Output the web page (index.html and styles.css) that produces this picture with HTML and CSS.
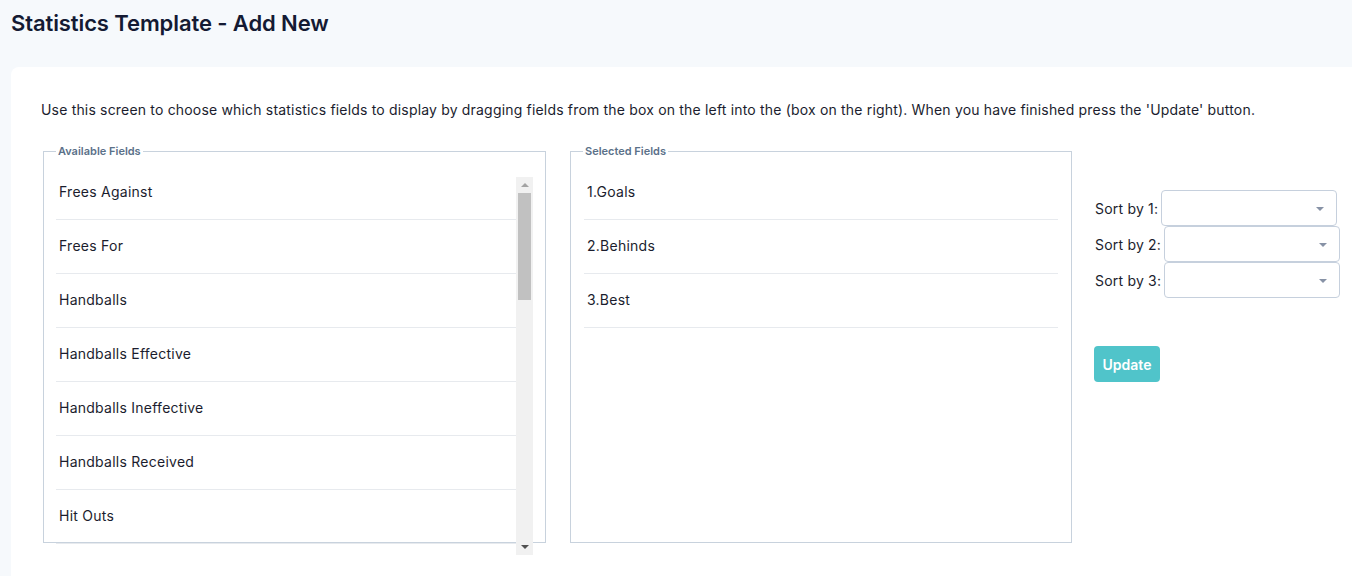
FILE: index.html
```html
<!DOCTYPE html>
<html>
<head>
<meta charset="utf-8">
<link rel="stylesheet" href="styles.css">
</head>
<body>
<h1 class="title">Statistics Template - Add New</h1>
<div class="card">
  <p class="intro">Use this screen to choose which statistics fields to display by dragging fields from the box on the left into the (box on the right). When you have finished press the 'Update' button.</p>
  <div class="row">
    <fieldset class="box">
      <legend class="legend">Available Fields</legend>
      <div class="avail">
        <div class="avail-items">
          <div class="avail-inner">
            <div class="item">Frees Against</div>
            <div class="item">Frees For</div>
            <div class="item">Handballs</div>
            <div class="item">Handballs Effective</div>
            <div class="item">Handballs Ineffective</div>
            <div class="item">Handballs Received</div>
            <div class="item">Hit Outs</div>
          </div>
        </div>
        <div class="sbar">
          <div class="sbtn"><span class="arr-up"></span></div>
          <div class="sthumb"></div>
          <div class="sfill"></div>
          <div class="sbtn"><span class="arr-down"></span></div>
        </div>
      </div>
    </fieldset>
    <fieldset class="box">
      <legend class="legend">Selected Fields</legend>
      <div class="sel">
        <div class="item">1.Goals</div>
        <div class="item">2.Behinds</div>
        <div class="item">3.Best</div>
      </div>
    </fieldset>
    <div class="sort">
      <div class="sort-row"><span class="sort-label">Sort by 1:</span><span class="select"><span class="caret"></span></span></div>
      <div class="sort-row"><span class="sort-label">Sort by 2:</span><span class="select"><span class="caret"></span></span></div>
      <div class="sort-row"><span class="sort-label">Sort by 3:</span><span class="select"><span class="caret"></span></span></div>
      <button class="btn">Update</button>
    </div>
  </div>
</div>
</body>
</html>
```
FILE: styles.css
```css
html, body {
  margin: 0;
  padding: 0;
  background: #f6f9fc;
  font-family: "Inter", "Roboto", "Liberation Sans", sans-serif;
  color: #1b1d2e;
  overflow: hidden;
}
.title {
  margin: 0;
  padding: 9px 0 0 11px;
  height: 67px;
  box-sizing: border-box;
  font-size: 22px;
  line-height: 28px;
  font-weight: 600;
  color: #141a33;
  letter-spacing: -0.1px;
}
.card {
  margin-left: 11px;
  background: #fff;
  border-top-left-radius: 8px;
  padding: 33px 0 0 30px;
  height: 509px;
  box-sizing: border-box;
}
.intro {
  margin: 0 0 25px 0;
  font-size: 14px;
  line-height: 20px;
  color: #1b1d2e;
  letter-spacing: 0.18px;
}
.row {
  display: flex;
  align-items: flex-start;
  margin-left: 2px;
}
.box {
  margin: 0;
  border: 1px solid #c8d2dd;
  padding: 0 13px;
  height: 398px;
  box-sizing: border-box;
  min-width: 0;
}
.box:first-child { width: 503px; margin-right: 24px; }
.box:nth-child(2) { width: 502px; margin-right: 22px; }
.legend {
  font-size: 11px;
  font-weight: 600;
  color: #5b7189;
  padding: 0 2px;
  margin-left: -1px;
  line-height: 13px;
  letter-spacing: 0;
}
.avail {
  display: flex;
  margin-top: 19px;
  margin-left: -1px;
  width: 477px;
  height: 378px;
}
.avail-items {
  width: 460px;
  height: 378px;
  overflow: hidden;
}
.avail-inner { margin-top: -11px; }
.item {
  height: 54px;
  box-sizing: border-box;
  border-bottom: 1px solid #e7eaee;
  padding-left: 3px;
  padding-bottom: 2px;
  display: flex;
  align-items: center;
  font-size: 14px;
  color: #1b1d2e;
  letter-spacing: 0.25px;
}
.sel { margin-top: 8px; }
.sbar {
  width: 17px;
  height: 378px;
  background: #f1f1f1;
  display: flex;
  flex-direction: column;
  align-items: center;
}
.sbtn {
  height: 16px;
  width: 17px;
  display: flex;
  align-items: center;
  justify-content: center;
}
.arr-up {
  width: 0; height: 0;
  border-left: 4px solid transparent;
  border-right: 4px solid transparent;
  border-bottom: 4px solid #a3a3a3;
}
.arr-down {
  width: 0; height: 0;
  border-left: 4px solid transparent;
  border-right: 4px solid transparent;
  border-top: 4px solid #505050;
}
.sthumb {
  width: 13px;
  height: 107px;
  background: #c1c1c1;
}
.sfill { flex: 1; }
.sort {
  padding-top: 45px;
  display: flex;
  flex-direction: column;
  align-items: flex-start;
}
.sort-row {
  display: flex;
  align-items: center;
  height: 36px;
}
.sort-label {
  font-size: 14px;
  color: #1b1d2e;
  padding-left: 1px;
  margin-right: 3px;
  letter-spacing: 0.2px;
}
.select {
  position: relative;
  width: 176px;
  height: 36px;
  box-sizing: border-box;
  border: 1px solid #c6d0dd;
  border-radius: 4px;
  background: #fff;
}
.caret {
  position: absolute;
  right: 12px;
  top: 16px;
  width: 0; height: 0;
  border-left: 4px solid transparent;
  border-right: 4px solid transparent;
  border-top: 4px solid #8792a6;
}
.btn {
  margin-top: 48px;
  width: 66px;
  height: 36px;
  border: none;
  border-radius: 4px;
  background: #50c4ca;
  color: #fff;
  font-family: "Inter", "Roboto", "Liberation Sans", sans-serif;
  font-size: 14px;
  font-weight: 600;
  padding: 0;
}
```
